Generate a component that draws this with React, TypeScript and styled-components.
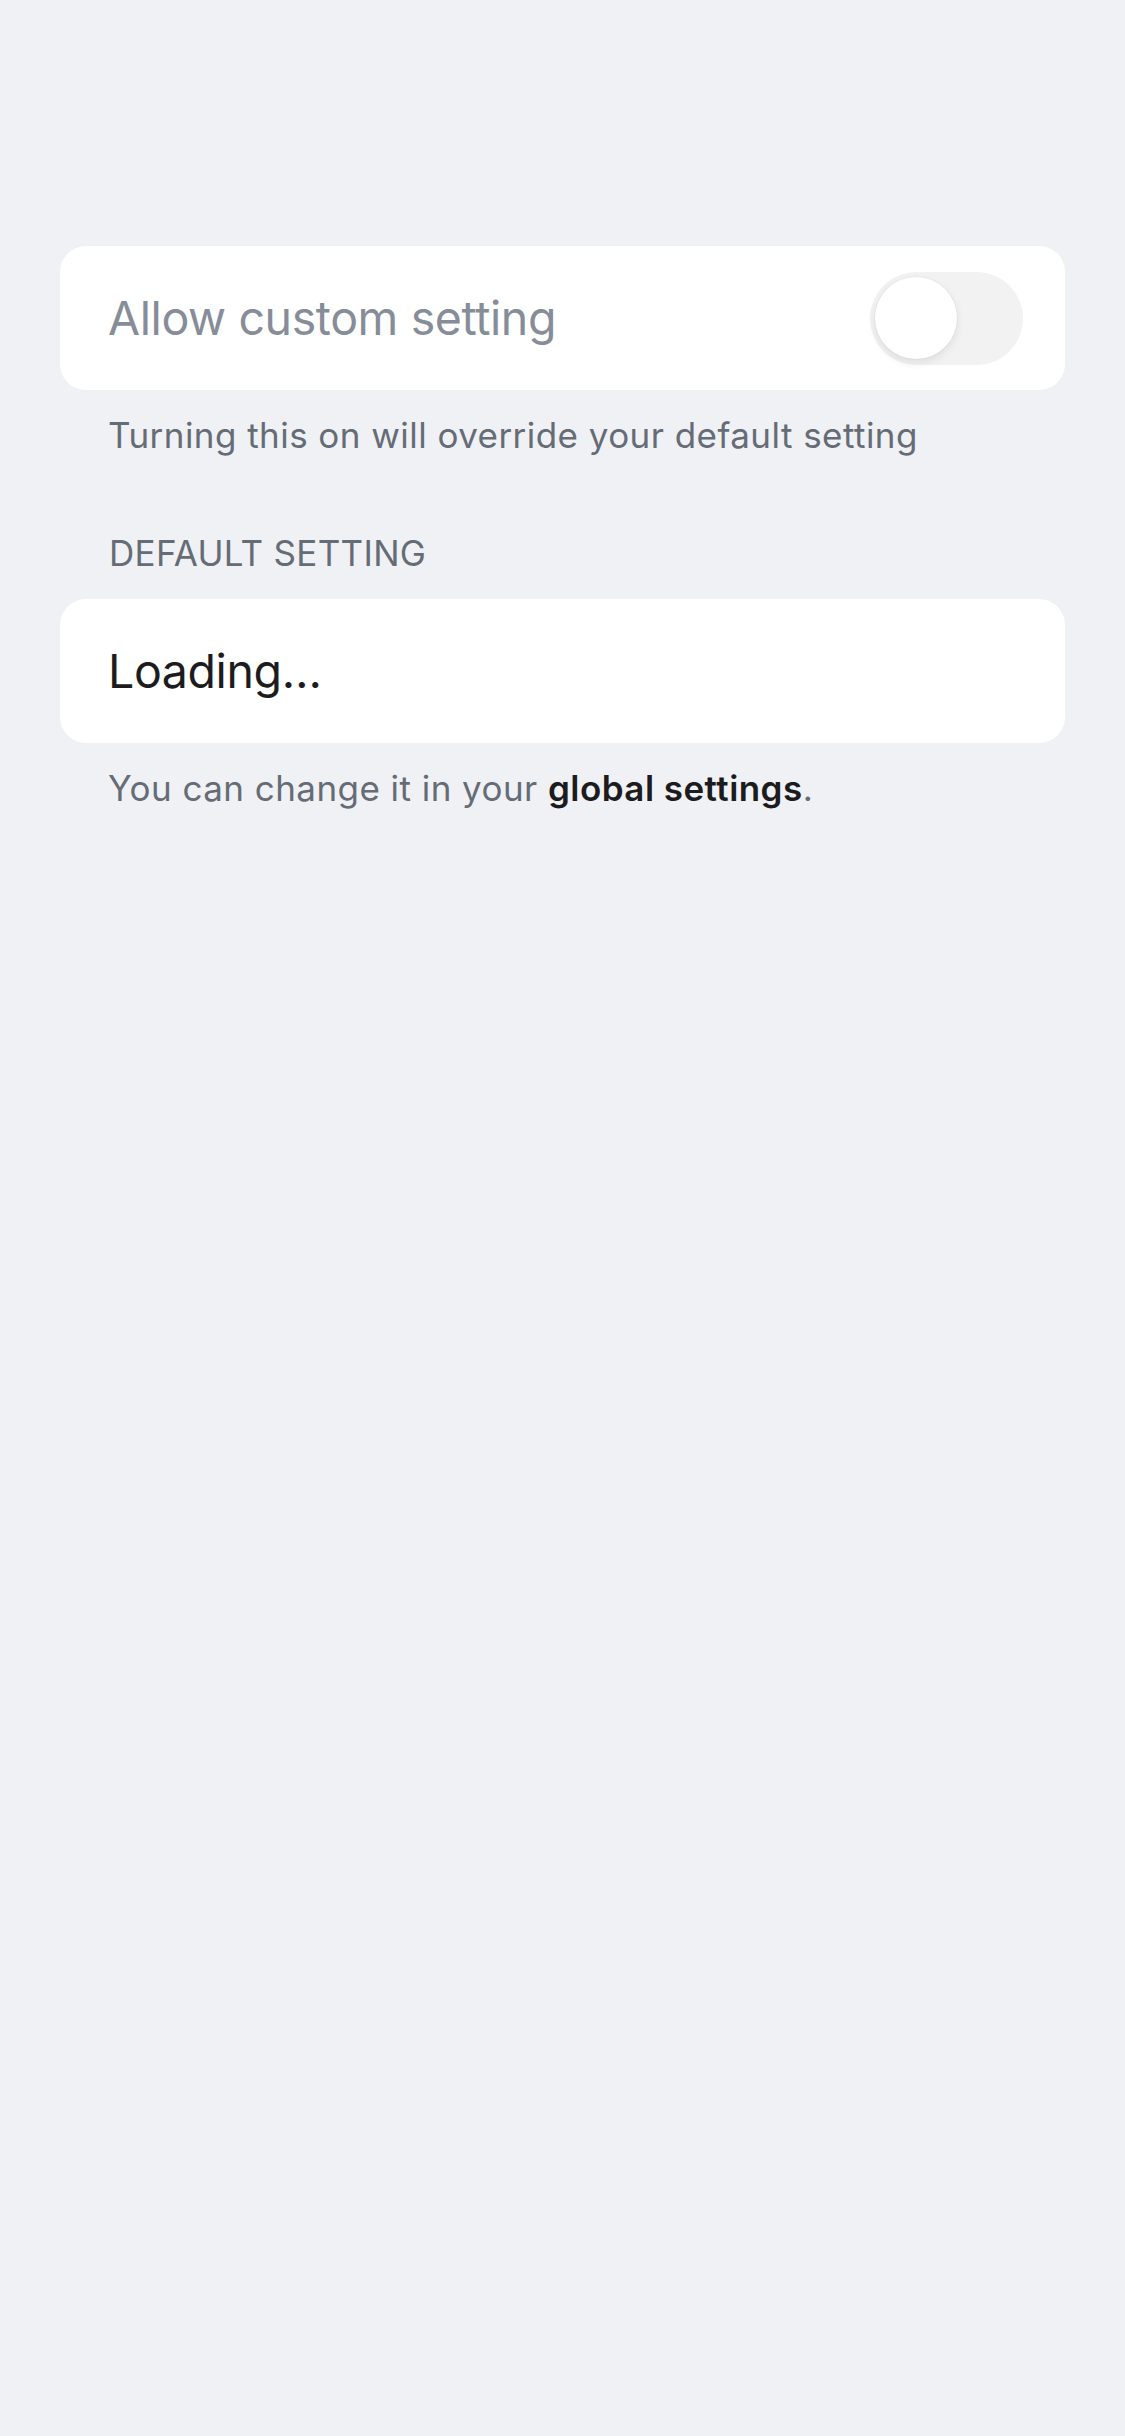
import React from "react";
import styled, { createGlobalStyle } from "styled-components";

const Global = createGlobalStyle`
  html, body {
    margin: 0;
    padding: 0;
    background: #f0f1f5;
  }
  body {
    font-family: Inter, "Noto Sans", "Liberation Sans", sans-serif;
    -webkit-font-smoothing: antialiased;
  }
`;

const Page = styled.div`
  min-height: 2436px;
  background: #f0f1f5;
  padding: 246px 60px 0;
  box-sizing: border-box;
  display: flex;
  flex-direction: column;
`;

const Card = styled.div`
  background: #ffffff;
  border-radius: 26px;
  height: 144px;
  padding: 0 42px 0 48px;
  box-sizing: border-box;
  display: flex;
  align-items: center;
  justify-content: space-between;
`;

const RowText = styled.span<{ $muted?: boolean }>`
  font-size: 46.5px;
  line-height: normal;
  color: ${(p) => (p.$muted ? "#868d98" : "#1c1c1e")};
  letter-spacing: -0.4px;
`;

const Caption = styled.p<{ $top: number }>`
  margin: ${(p) => p.$top}px 0 0;
  padding-left: 48px;
  font-size: 35px;
  line-height: 48px;
  color: #656c76;
  letter-spacing: 0.45px;
`;

const SectionLabel = styled.div`
  margin: 70px 0 22px;
  padding-left: 49px;
  font-size: 35px;
  line-height: 48px;
  color: #656c76;
  text-transform: uppercase;
  letter-spacing: 0.3px;
`;

const Strong = styled.strong`
  font-weight: 600;
  color: #1c1c1e;
`;

const Track = styled.div`
  width: 153px;
  height: 93px;
  border-radius: 47px;
  background: #f2f2f3;
  padding: 5px;
  box-sizing: border-box;
  display: flex;
  align-items: center;
  flex-shrink: 0;
`;

const Knob = styled.div`
  width: 82px;
  height: 82px;
  border-radius: 50%;
  background: #ffffff;
  box-shadow: 0 4px 10px rgba(0, 0, 0, 0.08), 0 0 0 1px rgba(0, 0, 0, 0.03);
`;

export default function App() {
  return (
    <>
      <Global />
      <Page>
        <Card>
          <RowText $muted>Allow custom setting</RowText>
          <Track>
            <Knob />
          </Track>
        </Card>
        <Caption $top={21}>Turning this on will override your default setting</Caption>
        <SectionLabel>Default setting</SectionLabel>
        <Card>
          <RowText>Loading…</RowText>
        </Card>
        <Caption $top={21}>
          You can change it in your <Strong>global settings</Strong>.
        </Caption>
      </Page>
    </>
  );
}
